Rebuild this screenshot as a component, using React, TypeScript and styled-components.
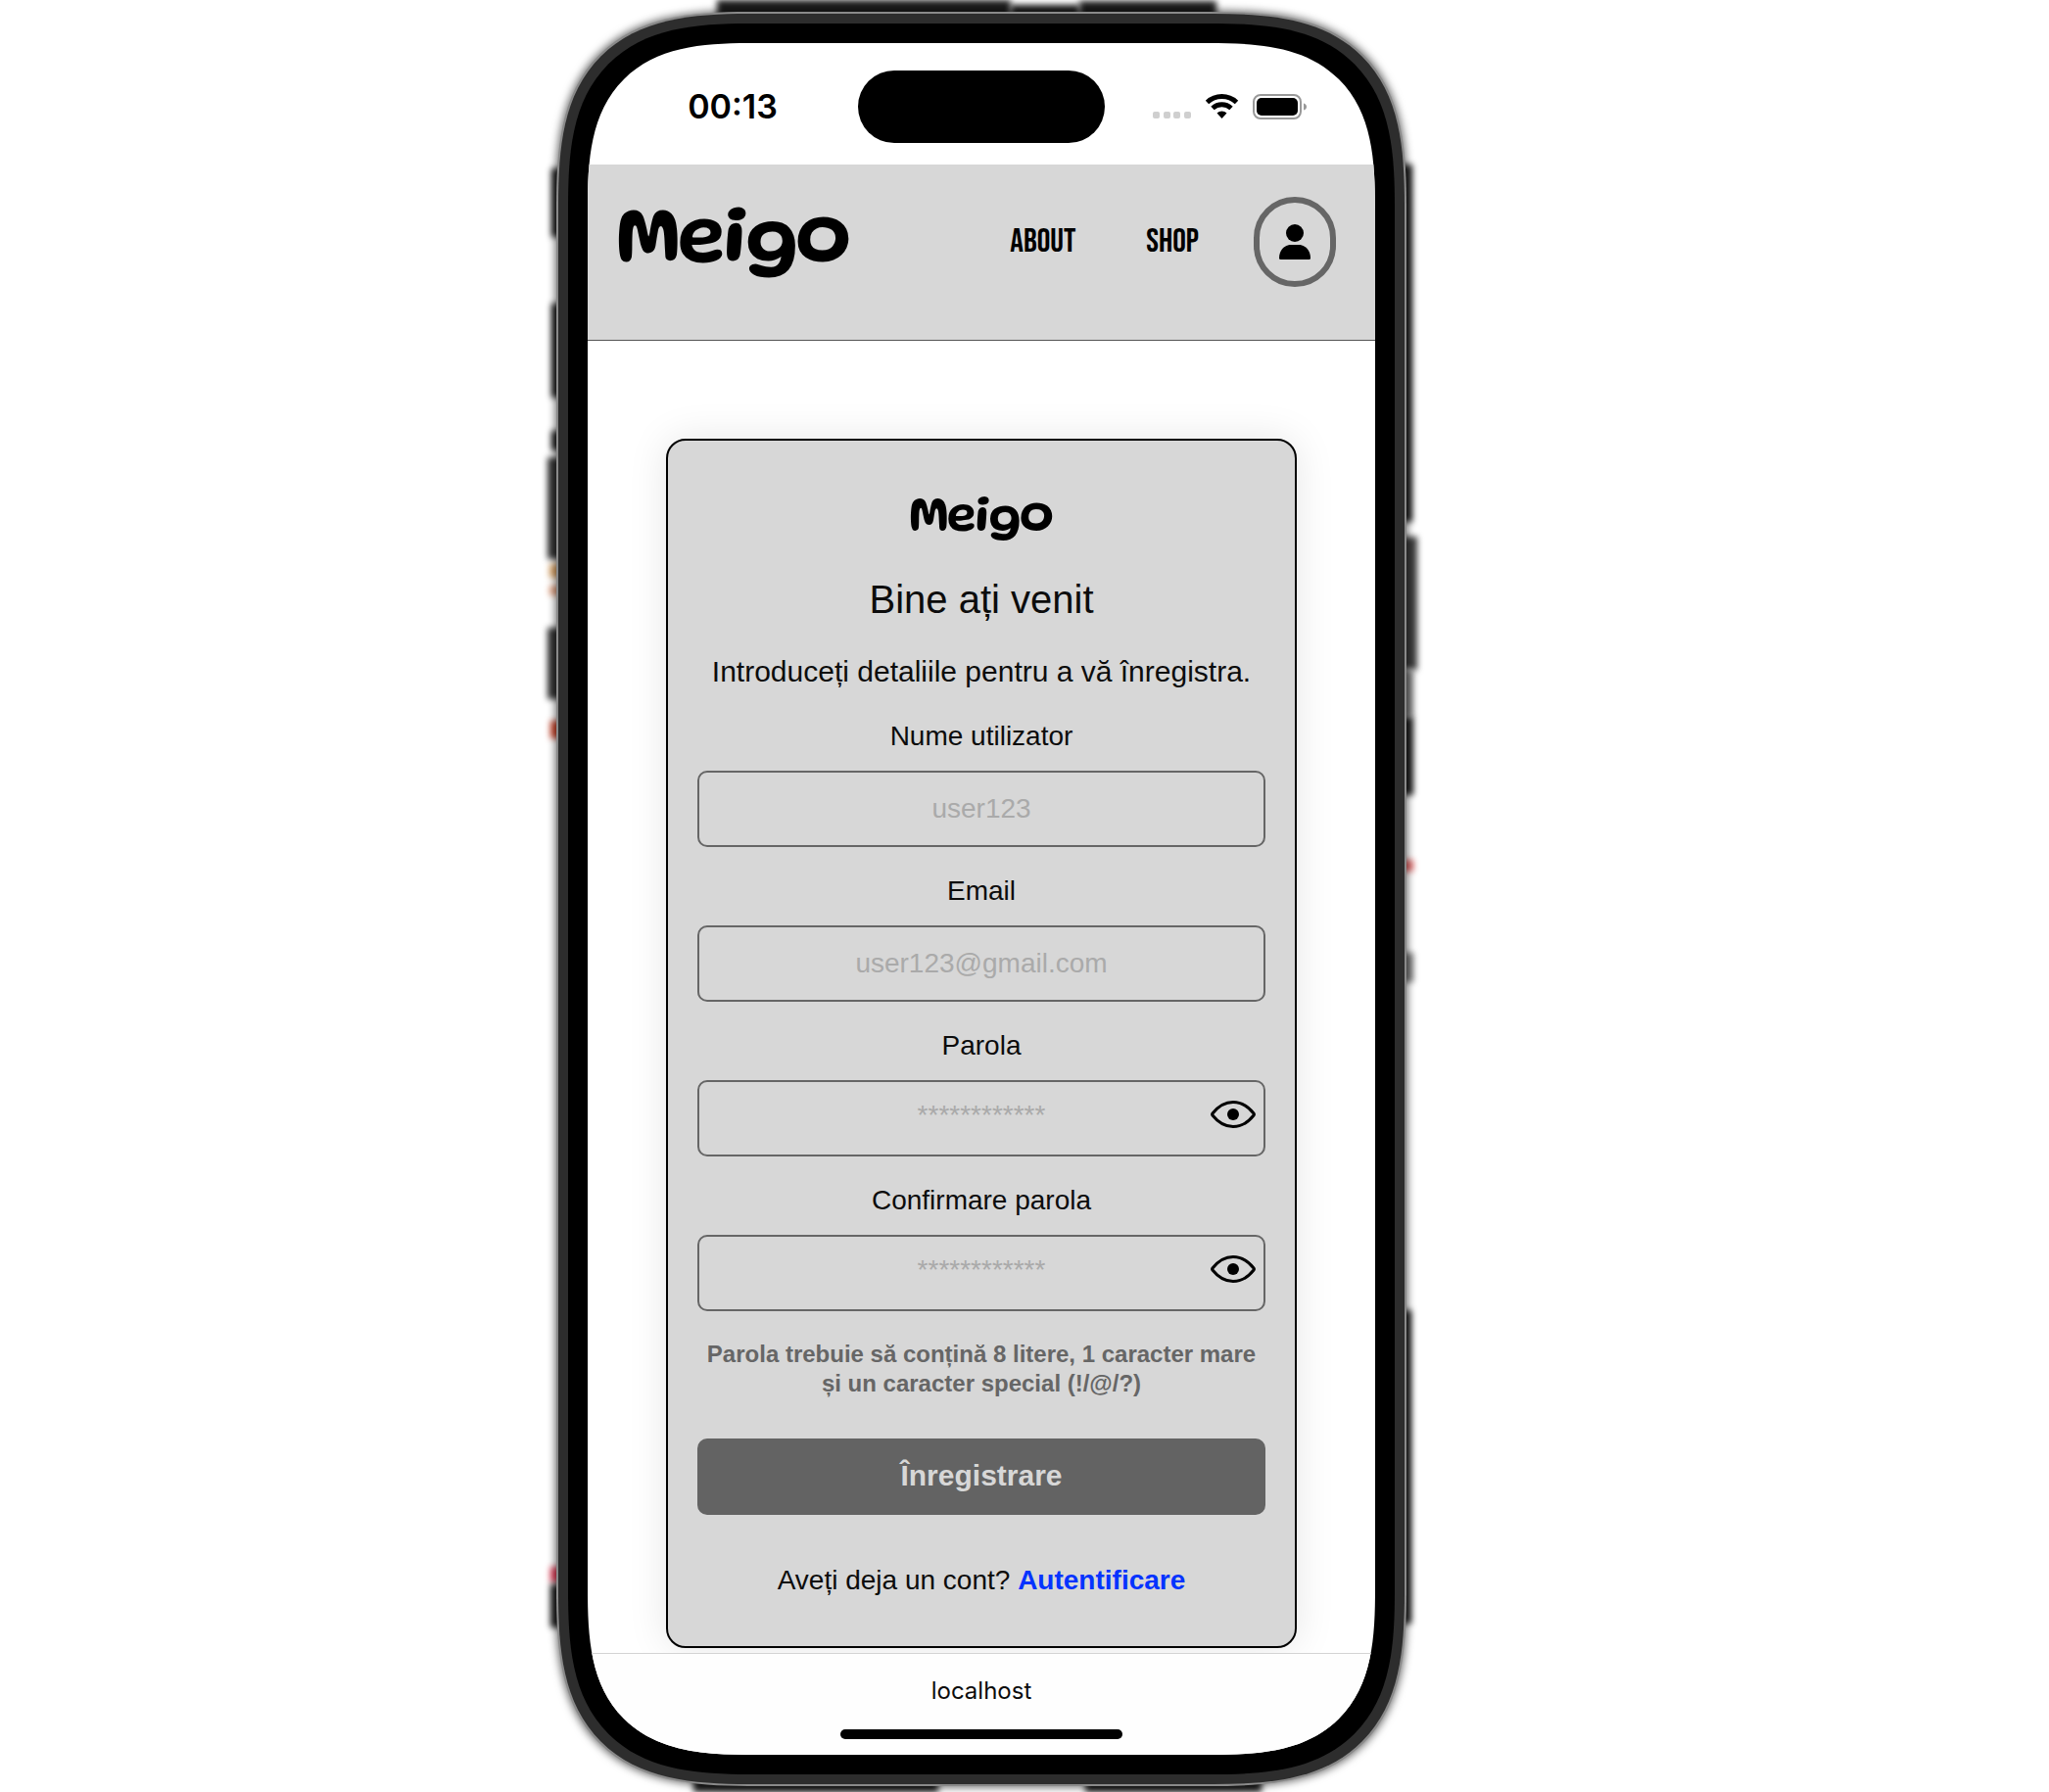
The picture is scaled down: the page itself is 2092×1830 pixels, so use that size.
import React, { useId, useState } from "react";
import styled, { createGlobalStyle } from "styled-components";

const color = {
  ink: "#0c0c0c",
  surface: "#d7d7d7",
  line: "#666666",
  fill: "#636363",
  muted: "#aaaaaa",
  link: "#0433ff",
};

const GlobalStyle = createGlobalStyle`
  *, *::before, *::after { box-sizing: border-box; }
  body {
    margin: 0;
    background: #fff;
    color: ${color.ink};
    font-family: "Liberation Sans", Arial, sans-serif;
  }
  h1, p { margin: 0; }
  button, input { font: inherit; }
`;

const Page = styled.div`
  display: flex;
  justify-content: center;
  padding: 12px 88px 6px 0;
  overflow: hidden;
`;

const Frame = styled.div`
  position: relative;
  z-index: 0;
  width: 100%;
  max-width: 868px;
`;

const rounded = (plain: number, smooth: number) => `
  border-radius: ${plain}px;
  @supports (corner-shape: superellipse(1.5)) {
    border-radius: ${smooth}px;
    corner-shape: superellipse(1.5);
  }
`;

const Rim = styled.div`
  padding: 10px;
  border: 2px solid #8a8a8a;
  background: #2d2d2d;
  box-shadow: 0 0 8px 1px rgba(0, 0, 0, 0.6);
  ${rounded(160, 202)}
`;

const Bezel = styled.div`
  padding: 20px;
  background: #000;
  ${rounded(148, 190)}
`;

const Screen = styled.div`
  overflow: hidden;
  background: #fff;
  ${rounded(128, 170)}
`;

type Side = "left" | "right" | "top" | "bottom";

const Blot = styled.span<{ $side: Side; $from: number; $length: number; $depth: number; $tone?: string }>`
  position: absolute;
  z-index: -1;
  background: ${(p) => p.$tone ?? "#1c1c1c"};
  filter: blur(3px);
  ${(p) => p.$side}: -${(p) => p.$depth}px;
  ${(p) =>
    p.$side === "left" || p.$side === "right"
      ? `top: ${p.$from}px; height: ${p.$length}px; width: 20px;`
      : `left: ${p.$from}px; width: ${p.$length}px; height: 20px;`}
`;

const StatusBar = styled.div`
  display: grid;
  grid-template-columns: 1fr 252px 1fr;
  align-items: center;
  height: 124px;
  padding-top: 6px;
`;

const Time = styled.time`
  padding-left: 20px;
  text-align: center;
  font: 600 34px/40px Inter, sans-serif;
  color: #000;
`;

const Island = styled.div`
  height: 74px;
  border-radius: 37px;
  background: #000;
`;

const Signals = styled.div`
  display: flex;
  justify-content: center;
  align-items: center;
  padding-right: 20px;
`;

const Header = styled.header`
  display: flex;
  justify-content: space-between;
  align-items: center;
  height: 180px;
  padding: 33px 40px 54px 32px;
  border-bottom: 1px solid #555;
  background: ${color.surface};
`;

const Nav = styled.nav`
  display: flex;
  align-items: center;
`;

const NavLink = styled.a`
  margin-right: 56px;
  color: #000;
  font: 400 34px/32px "Bebas Neue", "Liberation Sans Narrow", "Liberation Sans", sans-serif;
  text-decoration: none;
  & + & { margin-left: 16px; }
`;

const ProfileButton = styled.button`
  display: grid;
  place-items: center;
  width: 84px;
  height: 92px;
  padding: 0;
  border: 6px solid ${color.line};
  border-radius: 50px;
  background: transparent;
  color: #000;
`;

const Main = styled.main`
  padding: 100px 80px 5px;
  overflow: hidden;
`;

const Card = styled.form`
  display: flex;
  flex-direction: column;
  align-items: center;
  padding: 58px 30px 51px;
  border: 2px solid #000;
  border-radius: 20px;
  background: ${color.surface};
  box-shadow: 0 0 40px rgba(0, 0, 0, 0.1);
  text-align: center;
`;

const Title = styled.h1`
  margin-top: 36px;
  font-size: 40px;
  line-height: 48px;
  font-weight: 400;
`;

const Intro = styled.p`
  margin: 32px 0;
  font-size: 30px;
  line-height: 36px;
  white-space: nowrap;
`;

const Fields = styled.div`
  display: flex;
  flex-direction: column;
  gap: 29px;
  width: 100%;
`;

const FieldBox = styled.div`
  display: flex;
  flex-direction: column;
  gap: 19px;
`;

const Label = styled.label`
  font-size: 28px;
  line-height: 32px;
`;

const InputWrap = styled.div`
  position: relative;
  display: flex;
`;

const Input = styled.input`
  width: 100%;
  height: 78px;
  padding: 0 56px 1px;
  border: 2px solid ${color.line};
  border-radius: 10px;
  background: transparent;
  color: ${color.ink};
  font-size: 28px;
  text-align: center;
  &[type="password"] { padding-bottom: 6px; }
  &::placeholder { color: ${color.muted}; opacity: 1; }
`;

const RevealButton = styled.button`
  position: absolute;
  top: 16px;
  right: 8px;
  display: grid;
  place-items: center;
  width: 50px;
  height: 38px;
  padding: 0;
  border: 0;
  background: transparent;
  color: #000;
`;

const Hint = styled.p`
  margin-top: 29px;
  color: ${color.line};
  font-size: 24px;
  line-height: 30px;
  font-weight: 700;
`;

const Submit = styled.button`
  width: 100%;
  height: 78px;
  margin: 41px 0 51px;
  padding: 0 0 2px;
  border: 0;
  border-radius: 10px;
  background: ${color.fill};
  color: ${color.surface};
  font-size: 30px;
  font-weight: 700;
`;

const Footnote = styled.p`
  font-size: 28px;
  line-height: 32px;
`;

const LoginLink = styled.a`
  color: ${color.link};
  font-weight: 700;
  text-decoration: none;
`;

const BrowserBar = styled.footer`
  display: flex;
  flex-direction: column;
  align-items: center;
  gap: 24px;
  height: 104px;
  padding-top: 23px;
  border-top: 1px solid #d4d4d4;
  background: #fefefe;
`;

const Address = styled.span`
  font: 400 24px/30px Inter, sans-serif;
`;

const HomeIndicator = styled.div`
  width: 288px;
  height: 10px;
  border-radius: 5px;
  background: #000;
`;

const LogoText = styled.text`
  font: 400 80px Gluten, "DejaVu Sans", sans-serif;
  stroke: #000;
  stroke-width: 3px;
  stroke-linejoin: round;
`;

function Logo({ width, height }: { width: number; height: number }) {
  return (
    <svg width={width} height={height} viewBox="0 0 234 71" overflow="visible" role="img" aria-label="Meigo">
      <LogoText x="-2" y="52">
        Meigo
      </LogoText>
    </svg>
  );
}

function StatusIcons() {
  return (
    <svg width="158" height="28" viewBox="0 0 158 28" aria-hidden="true">
      {[0, 11, 21, 32].map((x) => (
        <rect key={x} x={x} y="19" width="7" height="7" rx="2" fill="#cfcfcf" />
      ))}
      <g fill="none" stroke="#000" strokeWidth="5">
        <path d="M55.500 9.500a22 22 0 0 1 30 0" />
        <path d="M61 15.500a14 14 0 0 1 19 0" />
      </g>
      <path d="M65.500 20.500a7.500 7.500 0 0 1 10 0L70.500 26z" fill="#000" />
      <rect x="103" y="2" width="48" height="24" rx="7" fill="none" stroke="#999" strokeWidth="2" />
      <rect x="106" y="5" width="42" height="18" rx="5" fill="#000" />
      <path d="M154 10.500q3 1 3 3.500t-3 3.500z" fill="#999" />
    </svg>
  );
}

function PersonIcon() {
  return (
    <svg width="32" height="36" viewBox="0 0 32 36" fill="currentColor" aria-hidden="true">
      <circle cx="16" cy="9" r="9" />
      <path d="M12 21h8c7 0 12 6 12 13.500q0 1.500-1.500 1.500h-29Q0 36 0 34.500C0 27 5 21 12 21z" />
    </svg>
  );
}

function EyeIcon() {
  return (
    <svg width="46" height="28" viewBox="0 0 46 28" aria-hidden="true">
      <path
        d="M2 13C8 5.500 15 1.500 23 1.500s15 4 21 11.500q0.800 1 0 2C38 22.500 31 26.500 23 26.500s-15-4-21-11.500q-0.800-1 0-2z"
        fill="none"
        stroke="currentColor"
        strokeWidth="3"
      />
      <circle cx="23" cy="14" r="6" fill="currentColor" />
    </svg>
  );
}

function Field({ label, type, placeholder }: { label: string; type: string; placeholder: string }) {
  const id = useId();
  const [shown, setShown] = useState(false);
  const secret = type === "password";
  return (
    <FieldBox>
      <Label htmlFor={id}>{label}</Label>
      <InputWrap>
        <Input id={id} type={secret && shown ? "text" : type} placeholder={placeholder} />
        {secret && (
          <RevealButton type="button" aria-label="Arată parola" onClick={() => setShown(!shown)}>
            <EyeIcon />
          </RevealButton>
        )}
      </InputWrap>
    </FieldBox>
  );
}

const blots: { side: Side; from: number; length: number; depth: number; tone?: string }[] = [
  { side: "left", from: 160, length: 70, depth: 5 },
  { side: "left", from: 298, length: 96, depth: 5 },
  { side: "left", from: 428, length: 20, depth: 5 },
  { side: "left", from: 455, length: 104, depth: 9, tone: "#333333" },
  { side: "left", from: 564, length: 14, depth: 7, tone: "#d9a468" },
  { side: "left", from: 586, length: 10, depth: 7, tone: "#e0a080" },
  { side: "left", from: 629, length: 73, depth: 9, tone: "#333333" },
  { side: "left", from: 724, length: 18, depth: 6, tone: "#c8452c" },
  { side: "left", from: 1588, length: 16, depth: 6, tone: "#e0405a" },
  { side: "left", from: 1606, length: 44, depth: 6 },
  { side: "right", from: 156, length: 365, depth: 6 },
  { side: "right", from: 536, length: 136, depth: 11, tone: "#3a3a3a" },
  { side: "right", from: 672, length: 48, depth: 7, tone: "#777777" },
  { side: "right", from: 720, length: 80, depth: 7 },
  { side: "right", from: 866, length: 12, depth: 7, tone: "#e06a6a" },
  { side: "right", from: 961, length: 30, depth: 7, tone: "#777777" },
  { side: "right", from: 1326, length: 320, depth: 5 },
  { side: "top", from: 164, length: 300, depth: 12 },
  { side: "top", from: 464, length: 70, depth: 7 },
  { side: "top", from: 534, length: 140, depth: 11 },
  { side: "bottom", from: 140, length: 250, depth: 6 },
  { side: "bottom", from: 540, length: 180, depth: 6 },
];

export default function App() {
  return (
    <>
      <GlobalStyle />
      <Page>
        <Frame>
          {blots.map((b) => (
            <Blot
              key={b.side + b.from}
              $side={b.side}
              $from={b.from}
              $length={b.length}
              $depth={b.depth}
              $tone={b.tone}
            />
          ))}
          <Rim>
            <Bezel>
              <Screen>
                <StatusBar>
                  <Time>00:13</Time>
                  <Island />
                  <Signals>
                    <StatusIcons />
                  </Signals>
                </StatusBar>
                <Header>
                  <Logo width={234} height={71} />
                  <Nav>
                    <NavLink href="#about">ABOUT</NavLink>
                    <NavLink href="#shop">SHOP</NavLink>
                    <ProfileButton type="button" aria-label="Profil">
                      <PersonIcon />
                    </ProfileButton>
                  </Nav>
                </Header>
                <Main>
                  <Card onSubmit={(e) => e.preventDefault()}>
                    <Logo width={144} height={44} />
                    <Title>Bine ați venit</Title>
                    <Intro>Introduceți detaliile pentru a vă înregistra.</Intro>
                    <Fields>
                      <Field label="Nume utilizator" type="text" placeholder="user123" />
                      <Field label="Email" type="email" placeholder="user123@gmail.com" />
                      <Field label="Parola" type="password" placeholder="************" />
                      <Field label="Confirmare parola" type="password" placeholder="************" />
                    </Fields>
                    <Hint>Parola trebuie să conțină 8 litere, 1 caracter mare și un caracter special (!/@/?)</Hint>
                    <Submit type="submit">Înregistrare</Submit>
                    <Footnote>
                      Aveți deja un cont? <LoginLink href="#login">Autentificare</LoginLink>
                    </Footnote>
                  </Card>
                </Main>
                <BrowserBar>
                  <Address>localhost</Address>
                  <HomeIndicator />
                </BrowserBar>
              </Screen>
            </Bezel>
          </Rim>
        </Frame>
      </Page>
    </>
  );
}
